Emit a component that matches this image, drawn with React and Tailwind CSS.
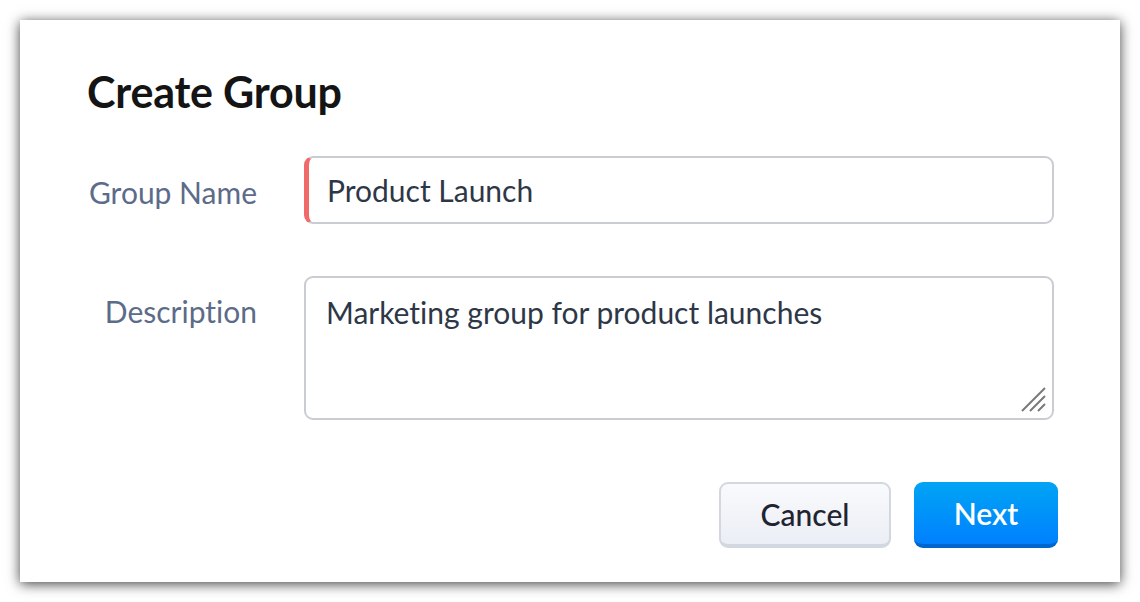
export default function App() {
  return (
    <div className="w-[1140px] h-[602px] bg-white pt-[20px] pl-[20px] [font-variant-ligatures:none]" style={{ fontFamily: 'Lato, "Noto Sans", sans-serif' }}>
      <div className="w-[1100px] h-[562px] bg-white shadow-[0_2px_12px_rgba(0,0,0,0.75)] pl-[67px] pr-[62px] pt-[46px]">
        <h1 className="text-[43px] font-bold text-[#141414] leading-[52px] tracking-[-0.2px]">Create Group</h1>

        <div className="mt-[38px] flex items-center">
          <label className="w-[170px] text-right text-[30px] text-[#5c6b89] shrink-0 pt-[4px]">Group Name</label>
          <div className="ml-[47px] flex-1 mr-[4px] h-[68px] rounded-[9px] border-2 border-[#c9cdd3] border-l-[5px] border-l-[#f06a6a] flex items-center pl-[18px] text-[30px] text-[#2e3747]">
            Product Launch
          </div>
        </div>

        <div className="mt-[52px] flex items-start">
          <label className="w-[170px] text-right text-[30px] text-[#5c6b89] shrink-0 pt-[13px]">Description</label>
          <div className="relative ml-[47px] flex-1 mr-[4px] h-[144px] rounded-[9px] border-2 border-[#c9cdd3] pl-[20px] pt-[12px] text-[30px] text-[#2e3747]">
            Marketing group for product launches
            <svg className="absolute right-[5px] bottom-[5px]" width="28" height="28" viewBox="0 0 28 28">
              <path d="M3 26 L26 3 M11 26 L26 11 M19 26 L26 19" stroke="#7a7a7a" strokeWidth="2" strokeLinecap="butt" />
            </svg>
          </div>
        </div>

        <div className="mt-[62px] flex justify-end gap-[23px]">
          <button className="w-[172px] h-[66px] rounded-[9px] border-2 border-[#d3d7e0] border-b-[4px] bg-gradient-to-b from-[#f9fafc] to-[#ebeef5] text-[30px] font-medium text-[#1f2430]">
            Cancel
          </button>
          <button className="w-[144px] h-[66px] rounded-[9px] border-b-[4px] border-[#0065cc] bg-gradient-to-b from-[#04a4f4] to-[#0080fe] text-[30px] font-semibold text-white">
            Next
          </button>
        </div>
      </div>
    </div>
  )
}
